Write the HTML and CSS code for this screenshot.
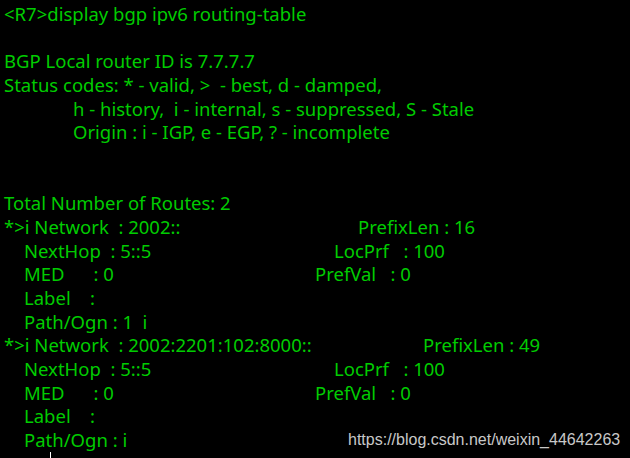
FILE: index.html
```html
<!DOCTYPE html>
<html>
<head>
<meta charset="utf-8">
<link rel="stylesheet" href="styles.css">
</head>
<body>
<div class="term">
  <div class="line">&lt;R7&gt;display bgp ipv6 routing-table</div>
  <div class="line"> </div>
  <div class="line">BGP Local router ID is 7.7.7.7</div>
  <div class="line">Status codes: * - valid, &gt;  - best, d - damped,</div>
  <div class="line indent">h - history,  i - internal, s - suppressed, S - Stale</div>
  <div class="line indent">Origin : i - IGP, e - EGP, ? - incomplete</div>
  <div class="line"> </div>
  <div class="line"> </div>
  <div class="line">Total Number of Routes: 2</div>

  <div class="line"><span class="left to-358">*&gt;i Network  : 2002::</span><span>PrefixLen : 16</span></div>
  <div class="line sub"><span class="left to-334">NextHop  : 5::5</span><span>LocPrf   : 100</span></div>
  <div class="line sub"><span class="left to-315">MED      : 0</span><span>PrefVal   : 0</span></div>
  <div class="line sub">Label    :</div>
  <div class="line sub">Path/Ogn : 1  i</div>

  <div class="line"><span class="left to-423">*&gt;i Network  : 2002:2201:102:8000::</span><span>PrefixLen : 49</span></div>
  <div class="line sub"><span class="left to-334">NextHop  : 5::5</span><span>LocPrf   : 100</span></div>
  <div class="line sub"><span class="left to-315">MED      : 0</span><span>PrefVal   : 0</span></div>
  <div class="line sub">Label    :</div>
  <div class="line sub">Path/Ogn : i<span class="watermark">https://blog.csdn.net/weixin_44642263</span></div>
  <div class="line sub"><span class="cursor"></span></div>
</div>
</body>
</html>
```

FILE: styles.css
```css
html, body {
  margin: 0;
  padding: 0;
  background: #000;
}

body {
  width: 630px;
  height: 458px;
  overflow: hidden;
}

.term {
  padding: 2px 0 0 4px;
  font-family: "Noto Sans", "Open Sans", sans-serif;
  font-size: 18.5px;
  color: #00cc00;
}

.line {
  height: 23.67px;
  line-height: 23.67px;
  white-space: pre;
  position: relative;
}

.indent {
  padding-left: 69px;
}

.sub {
  padding-left: 20px;
}

.left {
  display: inline-block;
}

.to-358 { width: 354px; }
.to-423 { width: 419px; }
.sub .to-334 { width: 310px; }
.sub .to-315 { width: 291px; }

.watermark {
  position: absolute;
  left: 344px;
  top: 0;
  font-family: "Liberation Sans", Arial, sans-serif;
  font-size: 16px;
  color: #c8c8c8;
}

.cursor {
  display: inline-block;
  width: 1px;
  height: 7px;
  margin-left: 26px;
  margin-top: 1px;
  background: #fff;
  vertical-align: top;
}
```
